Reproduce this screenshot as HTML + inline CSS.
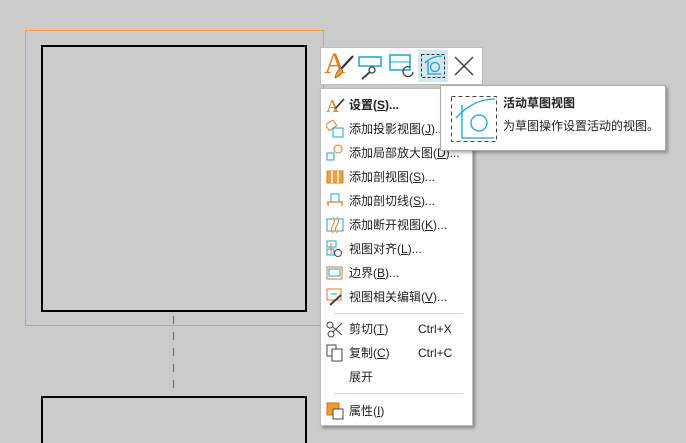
<!DOCTYPE html>
<html><head><meta charset="utf-8"><style>
*{margin:0;padding:0;box-sizing:border-box}
html,body{width:686px;height:443px;overflow:hidden}
body{background:#cbcbcb;position:relative;font-family:"Liberation Sans","Noto Sans CJK SC",sans-serif;font-size:12px;color:#222}
.abs{position:absolute}
.item{position:absolute;left:0;height:22px;line-height:22px;width:100%}
.item .t{position:absolute;left:28px;top:0}
.item .k{position:absolute;left:97px;top:0}
.item svg{position:absolute;left:5px;top:2px}
</style></head><body>
<div class="abs" style="left:25px;top:30px;width:299px;height:296px;border:1px solid #f89a3a"></div>
<div class="abs" style="left:41px;top:45px;width:266px;height:267px;border:2.5px solid #000"></div>
<div class="abs" style="left:173px;top:316px;width:1px;height:80px;background:repeating-linear-gradient(#666 0 8px,transparent 8px 16px)"></div>
<div class="abs" style="left:41px;top:396px;width:266px;height:60px;border:2.5px solid #000"></div>

<!-- toolbar -->
<div class="abs" style="left:320px;top:47px;width:163px;height:38px;background:#fff;border:1px solid #bdbdbd">
 <div class="abs" style="left:3px;top:-1px;font:30px 'Liberation Serif',serif;color:#e8781a">A</div>
 <svg class="abs" style="left:6px;top:5px" width="28" height="28"><path d="M26 3 L14 16" stroke="#333" stroke-width="2.2"/><path d="M14 15 Q9 18 8 25 Q14 23 16 18Z" fill="#e8a030" stroke="#8a5a10" stroke-width=".7"/></svg>
 <svg class="abs" style="left:36px;top:4px" width="28" height="28"><rect x="2" y="5" width="22" height="9" fill="none" stroke="#1aa5d0" stroke-width="1.5"/><circle cx="15" cy="18" r="3" fill="none" stroke="#444" stroke-width="1.3"/><path d="M13 20 L5 27" stroke="#444" stroke-width="2"/></svg>
 <svg class="abs" style="left:67px;top:4px" width="28" height="28"><rect x="2" y="3" width="20" height="15" fill="none" stroke="#1aa5d0" stroke-width="1.5"/><path d="M2 10 H22" stroke="#1aa5d0"/><path d="M25 20 a5 5 0 1 1 -3 -5" fill="none" stroke="#444" stroke-width="1.3"/></svg>
 <div class="abs" style="left:97px;top:2px;width:30px;height:32px;background:#d5e8f0"></div>
 <svg class="abs" style="left:99px;top:5px" width="26" height="26"><rect x="1.5" y="1.5" width="23" height="23" fill="none" stroke="#333" stroke-dasharray="3 2"/><path d="M5 10 Q12 3 22 3" fill="none" stroke="#1aa5d0" stroke-width="1.3"/><path d="M8 7 V21 H21" fill="none" stroke="#1aa5d0" stroke-width="1.3"/><circle cx="15" cy="14" r="4.5" fill="none" stroke="#1aa5d0" stroke-width="1.3"/></svg>
 <svg class="abs" style="left:132px;top:7px" width="22" height="22"><path d="M2 2 L20 20 M20 2 L2 20" stroke="#444" stroke-width="1.5"/></svg>
</div>

<!-- menu -->
<div class="abs" style="left:320px;top:88px;width:153px;height:338px;background:#fff;border:1px solid #bdbdbd;box-shadow:2px 2px 3px rgba(0,0,0,.35)">
 <div class="item" style="top:5px"><svg width="19" height="19"><text x="0" y="16" font-size="18" fill="#e87a1e" font-family="Liberation Serif">A</text><path d="M18 3 L9 13" stroke="#333" stroke-width="1.6"/><path d="M9 12 L6 17 L11 14Z" fill="#e8a030"/></svg><span class="t" style="font-weight:bold">设置(<u>S</u>)...</span></div>
 <div class="item" style="top:29px"><svg width="19" height="19"><rect x="1" y="2" width="9" height="7" fill="none" stroke="#e87a1e" transform="rotate(-35 5 6)"/><rect x="7" y="8" width="10" height="9" fill="none" stroke="#1aa5d0"/></svg><span class="t">添加投影视图(<u>J</u>)...</span></div>
 <div class="item" style="top:53px"><svg width="19" height="19"><rect x="1" y="9" width="7" height="7" fill="none" stroke="#1aa5d0"/><circle cx="12" cy="5" r="4" fill="none" stroke="#e87a1e"/></svg><span class="t">添加局部放大图(<u>D</u>)...</span></div>
 <div class="item" style="top:77px"><svg width="19" height="19"><rect x="1" y="3" width="16" height="12" fill="#f0a040" stroke="#e87a1e"/><path d="M6 3 V15 M12 3 V15" stroke="#fff" stroke-width="1.5"/></svg><span class="t">添加剖视图(<u>S</u>)...</span></div>
 <div class="item" style="top:101px"><svg width="19" height="19"><rect x="5" y="2" width="8" height="8" fill="none" stroke="#1aa5d0"/><path d="M1 10 H17 M2 10 V14 M16 10 V14" stroke="#e87a1e" stroke-width="1.3"/></svg><span class="t">添加剖切线(<u>S</u>)...</span></div>
 <div class="item" style="top:125px"><svg width="19" height="19"><rect x="1" y="3" width="16" height="12" fill="none" stroke="#1aa5d0"/><path d="M7 1 q3 4 0 8 q-3 4 0 8 M11 1 q3 4 0 8 q-3 4 0 8" stroke="#e87a1e" fill="#fff"/></svg><span class="t">添加断开视图(<u>K</u>)...</span></div>
 <div class="item" style="top:149px"><svg width="19" height="19"><rect x="1" y="1" width="9" height="6" fill="none" stroke="#1aa5d0"/><rect x="1" y="9" width="7" height="6" fill="none" stroke="#1aa5d0"/><circle cx="12" cy="13" r="3.5" fill="none" stroke="#444"/><path d="M5 3 V14" stroke="#e87a1e"/></svg><span class="t">视图对齐(<u>L</u>)...</span></div>
 <div class="item" style="top:173px"><svg width="19" height="19"><rect x="1" y="3" width="15" height="12" fill="none" stroke="#e87a1e"/><rect x="3" y="5" width="11" height="7" fill="none" stroke="#1aa5d0"/></svg><span class="t">边界(<u>B</u>)...</span></div>
 <div class="item" style="top:197px"><svg width="19" height="19"><rect x="1" y="1" width="14" height="11" fill="none" stroke="#e87a1e"/><path d="M5 6 H11" stroke="#1aa5d0"/><path d="M15 7 L4 17" stroke="#444" stroke-width="2"/></svg><span class="t">视图相关编辑(<u>V</u>)...</span></div>
 <div class="abs" style="left:13px;top:224px;width:129px;height:1px;background:#d8d8d8"></div>
 <div class="item" style="top:229px"><svg width="19" height="19"><circle cx="4" cy="5" r="3" fill="none" stroke="#444"/><circle cx="5" cy="14" r="3" fill="none" stroke="#444"/><path d="M7 12 L16 3 M7 7 L16 15" stroke="#444"/></svg><span class="t">剪切(<u>T</u>)</span><span class="k">Ctrl+X</span></div>
 <div class="item" style="top:253px"><svg width="19" height="19"><rect x="1" y="1" width="9" height="11" fill="#fff" stroke="#444"/><rect x="6" y="5" width="10" height="12" fill="#fff" stroke="#444"/></svg><span class="t">复制(<u>C</u>)</span><span class="k">Ctrl+C</span></div>
 <div class="item" style="top:277px"><span class="t">展开</span></div>
 <div class="abs" style="left:13px;top:304px;width:129px;height:1px;background:#d8d8d8"></div>
 <div class="item" style="top:311px"><svg width="19" height="19"><rect x="1" y="1" width="12" height="12" fill="#f09a30" stroke="#d07010"/><rect x="7" y="7" width="10" height="10" fill="#fff" stroke="#444"/></svg><span class="t">属性(<u>I</u>)</span></div>
</div>

<!-- tooltip -->
<div class="abs" style="left:440px;top:85px;width:226px;height:66px;background:#fff;border:1px solid #aaa;box-shadow:2px 2px 3px rgba(0,0,0,.3)">
 <svg class="abs" style="left:7px;top:7px" width="50" height="50"><rect x="3.5" y="3.5" width="45" height="45" fill="none" stroke="#444" stroke-dasharray="4 3"/><path d="M8 25 Q25 6 47 6" fill="none" stroke="#1aa5d0" stroke-width="1.3"/><path d="M14 12 V45 H46" fill="none" stroke="#1aa5d0" stroke-width="1.3"/><circle cx="31" cy="30" r="8" fill="none" stroke="#1aa5d0" stroke-width="1.3"/></svg>
 <div class="abs" style="left:62px;top:8px;font-weight:bold">活动草图视图</div>
 <div class="abs" style="left:62px;top:31px">为草图操作设置活动的视图。</div>
</div>
</body></html>
